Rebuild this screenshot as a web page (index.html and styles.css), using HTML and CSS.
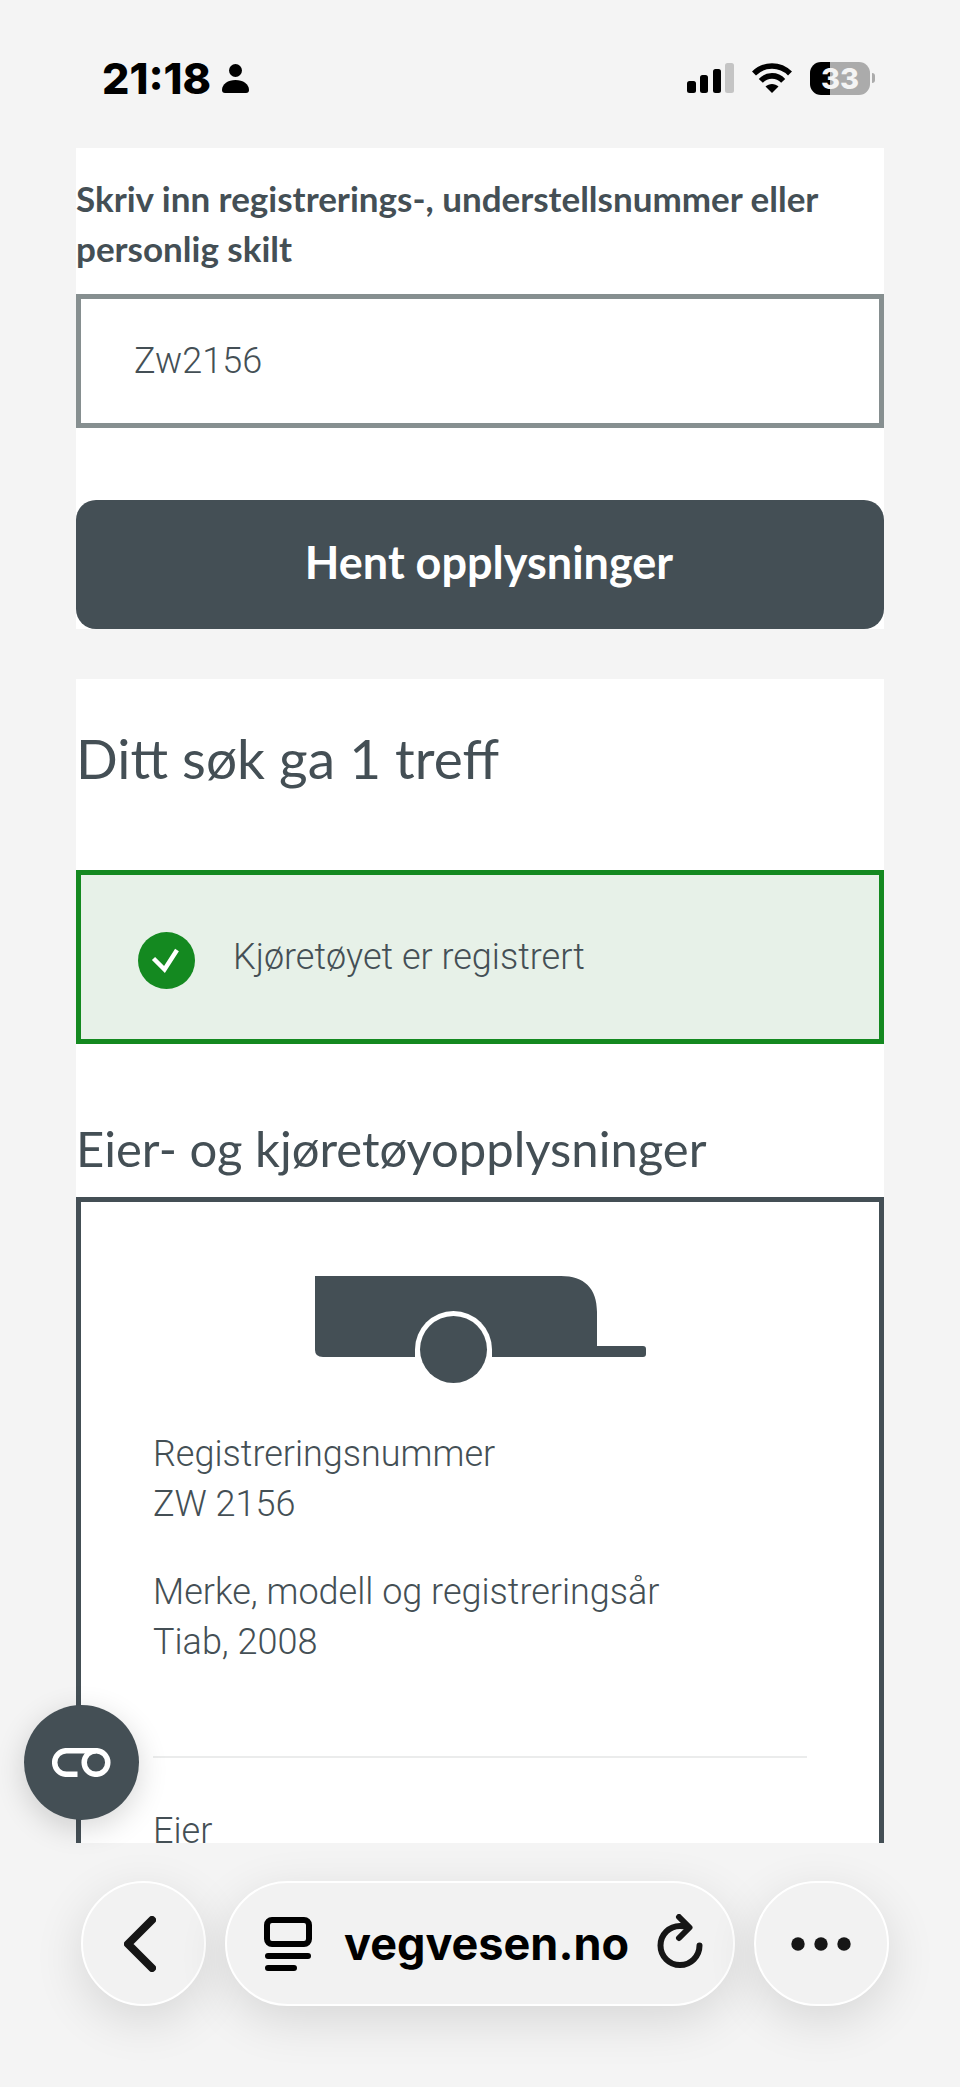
FILE: index.html
```html
<!DOCTYPE html>
<html lang="no">
<head>
<meta charset="utf-8">
<meta name="viewport" content="width=device-width, initial-scale=1">
<title>Kjøretøyopplysninger</title>
<link rel="stylesheet" href="styles.css">
</head>
<body>
<div class="screen">
  <header class="status-bar">
    <div class="status-left">
      <span class="clock">21:18</span>
      <svg class="icon-person" viewBox="0 0 27 29" aria-hidden="true"><circle cx="13.500" cy="6.500" r="6.500"/><path d="M3 29C1 29 0 28 0 26C0 20 6 16 13.500 16S27 20 27 26C27 28 26 29 24 29Z"/></svg>
    </div>
    <div class="status-right">
      <svg class="icon-signal" viewBox="0 0 47 30" aria-hidden="true"><rect x="0" y="18" width="9" height="12" rx="2.500"/><rect x="13" y="12" width="8" height="18" rx="2.500"/><rect x="26" y="6" width="8" height="24" rx="2.500"/><rect x="38" y="0" width="9" height="30" rx="2.500" fill="#c4c4c4"/></svg>
      <svg class="icon-wifi" viewBox="0 0 40 30" aria-hidden="true"><g fill="none" stroke="#000" stroke-width="5.600"><path d="M2 10.500C12 .5 28 .5 38 10.500"/><path d="M8.800 17.800C15 11.200 25 11.200 31.200 17.800"/></g><path d="M13.500 23.500C17 20 23 20 26.500 23.500L20 30Z"/></svg>
      <div class="battery"><span class="battery-body">33</span><span class="battery-cap"></span></div>
    </div>
  </header>

  <main class="page">
    <form class="search">
      <label class="search-label" for="regnr">Skriv inn registrerings-, understellsnummer eller personlig skilt</label>
      <input class="search-input" id="regnr" type="text" value="Zw2156">
      <button class="search-button" type="button">Hent opplysninger</button>
    </form>

    <section class="results">
      <h1 class="results-title">Ditt søk ga 1 treff</h1>
      <div class="alert" role="status">
        <svg class="alert-icon" viewBox="0 0 57 57" aria-hidden="true"><circle cx="28.500" cy="28.500" r="28.500" fill="#148920"/><path d="M15.500 26.500L26.500 37.500L39 18" fill="none" stroke="#fff" stroke-width="4.500"/></svg>
        <p class="alert-text">Kjøretøyet er registrert</p>
      </div>
      <h2 class="card-title">Eier- og kjøretøyopplysninger</h2>
      <div class="card">
        <svg class="trailer" viewBox="0 0 331 107" aria-hidden="true"><path d="M0 0H246C269 0 282 12 282 36V70H328Q331 70 331 73V78Q331 81 328 81H8Q0 81 0 74Z" fill="#444f55"/><path d="M100 82V73.500A38.500 38.500 0 0 1 177 73.500V82Z" fill="#fff"/><circle cx="138.500" cy="73.500" r="33.500" fill="#444f55"/></svg>
        <dl class="facts">
          <div class="fact"><dt>Registreringsnummer</dt><dd>ZW 2156</dd></div>
          <div class="fact"><dt>Merke, modell og registreringsår</dt><dd>Tiab, 2008</dd></div>
        </dl>
        <hr class="divider">
        <dl class="facts"><div class="fact"><dt>Eier</dt></div></dl>
      </div>
    </section>
  </main>

  <nav class="browser-bar" aria-label="Nettleser">
    <button class="assist" type="button" aria-label="Innstillinger"><svg viewBox="0 0 59 29" aria-hidden="true"><g fill="none" stroke="#fff" stroke-width="5.500"><circle cx="44" cy="14.500" r="11.800"/><path d="M44 2.700H14.500A11.800 11.800 0 0 0 14.500 26.300H25.500"/></g></svg></button>
    <button class="pill pill-back" type="button" aria-label="Tilbake"><svg class="icon-back" viewBox="0 0 32 56" aria-hidden="true"><path d="M28 4L4 28L28 52" fill="none" stroke="#161616" stroke-width="8" stroke-linecap="round" stroke-linejoin="round"/></svg></button>
    <div class="pill address">
      <button class="bare" type="button" aria-label="Sidemeny"><svg class="icon-reader" viewBox="0 0 48 54" aria-hidden="true"><g fill="none" stroke="#000" stroke-width="6" stroke-linecap="round"><rect x="3" y="3" width="42" height="24" rx="5"/><path d="M4 39H44M4 51H30"/></g></svg></button>
      <a class="address-text" href="#">vegvesen.no</a>
      <button class="bare" type="button" aria-label="Last på nytt"><svg class="icon-reload" viewBox="0 0 46 60" aria-hidden="true"><g fill="none" stroke="#161616" stroke-width="6" stroke-linecap="round" stroke-linejoin="round"><path d="M31 13.200Q27 12 23 12A19.500 19.500 0 1 0 42.500 31.500"/><path d="M22 3L32.500 13.500L22 24"/></g></svg></button>
    </div>
    <button class="pill pill-more" type="button" aria-label="Mer"><svg class="icon-more" viewBox="0 0 60 14" aria-hidden="true"><circle cx="7" cy="7" r="6.700"/><circle cx="30" cy="7" r="6.700"/><circle cx="53" cy="7" r="6.700"/></svg></button>
  </nav>
</div>
</body>
</html>
```

FILE: styles.css
```css
* { box-sizing: border-box; }

body {
  margin: 0;
  background: #f4f4f4;
  color: #444f55;
  font: 300 36px/50px Roboto, sans-serif;
}

button, input { font: inherit; color: inherit; margin: 0; }
button { border: 0; padding: 0; background: none; }
svg { display: block; flex: none; }

.screen {
  display: flex;
  flex-direction: column;
  height: 100vh;
  overflow: hidden;
}

/* Status bar */
.status-bar {
  display: flex;
  justify-content: space-between;
  flex: none;
  height: 148px;
  padding: 58px 85px 0 102px;
  color: #000;
}
.status-left, .status-right { display: flex; align-items: center; height: 40px; }
.status-left { gap: 11px; }
.status-right { gap: 18px; }
.clock { font: 800 43px/40px Inter, sans-serif; }
.icon-person { width: 27px; height: 29px; }
.icon-signal { width: 47px; height: 30px; }
.icon-wifi { width: 40px; height: 30px; }
.battery { display: flex; align-items: center; gap: 2px; }
.battery-body {
  width: 60px;
  height: 33px;
  border-radius: 11px;
  background: linear-gradient(90deg, #000 33%, #ababab 33%);
  color: #f4f4f4;
  font: 800 29px/33px Inter, sans-serif;
  text-align: center;
}
.battery-cap { width: 3px; height: 10px; border-radius: 0 5px 5px 0; background: #ababab; }

/* Page */
.page {
  flex: 1;
  min-height: 0;
  overflow: hidden;
  padding: 0 76px;
}
.search {
  display: flex;
  flex-direction: column;
  margin-bottom: 50px;
  padding-top: 25px;
  background: #fff;
}
.search-label { font: 700 35px/50px Lato, sans-serif; }
.search-input {
  width: 100%;
  height: 134px;
  margin: 21px 0 72px;
  padding: 0 53px;
  border: 5px solid #868f90;
  border-radius: 0;
  background: #fff;
}
.search-button {
  height: 129px;
  padding: 0 0 5px 18px;
  border-radius: 20px;
  background: #444f55;
  color: #fff;
  font: 700 45px/60px Lato, sans-serif;
}
.results { padding-top: 43px; background: #fff; }
.results-title { margin: 0; font: 400 55px/72px Lato, sans-serif; }
.alert {
  display: flex;
  align-items: center;
  gap: 38px;
  height: 174px;
  margin: 76px 0 72px;
  padding: 0 57px;
  border: 5px solid #148920;
  background: #e7f1e8;
}
.alert-icon { width: 57px; height: 57px; margin-top: 6px; }
.alert-text { margin: 0; }
.card-title { margin: 0 0 17px; font: 400 49px/64px Lato, sans-serif; }
.card {
  padding: 74px 72px 100px;
  border: 5px solid #444f55;
}
.trailer { width: 331px; height: 107px; margin: 0 auto 46px; }
.facts { display: flex; flex-direction: column; gap: 38px; margin: 0; }
.fact dd { margin: 0; }
.divider { height: 2px; margin: 89px 0 48px; border: 0; background: #ebecec; }

/* Browser toolbar */
.browser-bar {
  position: relative;
  display: flex;
  gap: 19px;
  flex: none;
  height: 244px;
  padding: 38px 71px 0 81px;
}
.pill {
  display: flex;
  align-items: center;
  justify-content: center;
  height: 125px;
  border: 2px solid #fff;
  border-radius: 63px;
  background: #f2f2f2;
  box-shadow: 0 14px 50px rgba(0, 0, 0, .12);
}
.pill-back { width: 125px; padding-right: 8px; }
.pill-more { width: 135px; padding-right: 2px; }
.icon-back { width: 32px; height: 56px; }
.icon-more { width: 60px; height: 14px; fill: #161616; }
.address { flex: 1; justify-content: space-between; padding: 0 30px 0 37px; }
.address-text {
  padding-left: 4px;
  color: #000;
  font: 700 45px/60px Inter, sans-serif;
  text-decoration: none;
}
.icon-reader { width: 48px; height: 54px; }
.icon-reload { width: 46px; height: 60px; }
.assist {
  position: absolute;
  left: 24px;
  bottom: 267px;
  display: flex;
  align-items: center;
  justify-content: center;
  width: 115px;
  height: 115px;
  border-radius: 50%;
  background: #444f55;
  box-shadow: 0 8px 30px rgba(0, 0, 0, .16);
}
.assist svg { width: 59px; height: 29px; }
```
